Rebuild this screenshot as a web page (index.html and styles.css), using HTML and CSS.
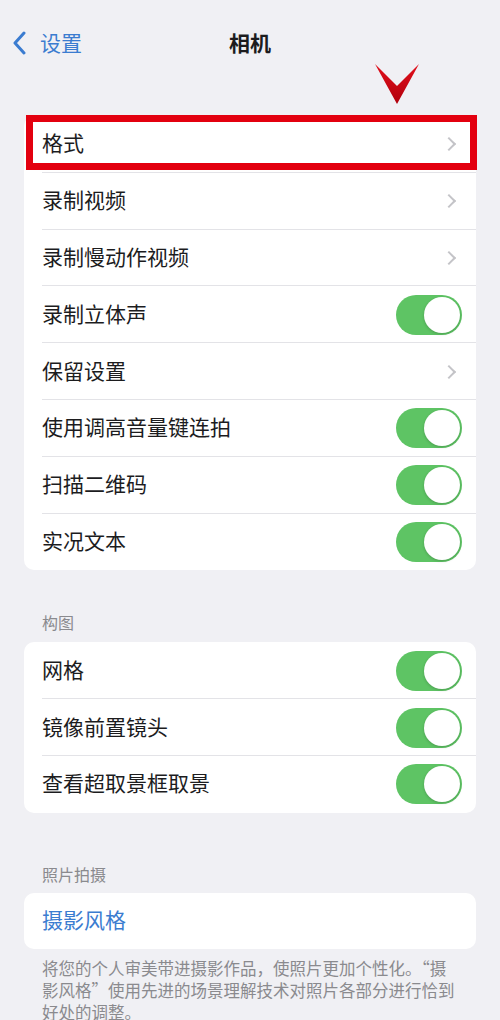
FILE: index.html
```html
<!DOCTYPE html>
<html lang="zh-CN">
<head>
    <meta charset="UTF-8">
    <meta name="viewport" content="width=device-width, initial-scale=1.0">
    <title>相机</title>
    <link rel="stylesheet" href="styles.css">
</head>
<body>
    <header class="nav">
        <a class="back" href="#">
            <svg width="15" height="24" viewBox="0 0 15 24"><path d="M12 2 L3 12 L12 22" fill="none" stroke="currentColor" stroke-width="3" stroke-linecap="round" stroke-linejoin="round"/></svg>
            <span>设置</span>
        </a>
        <h1 class="title">相机</h1>
        <span></span>
    </header>

    <!-- annotation arrow -->
    <svg class="pointer" width="44" height="42" viewBox="0 0 44 42">
        <defs>
            <linearGradient id="rg" x1="0" y1="0" x2="0" y2="1">
                <stop offset="0" stop-color="#e2101c"/>
                <stop offset="1" stop-color="#b0000c"/>
            </linearGradient>
        </defs>
        <path d="M0 0 L22 40 L44 0 L22 22 Z" fill="url(#rg)"/>
    </svg>

    <section class="group first">
        <div class="card">
            <div class="row marked"><span>格式</span><i class="chev"></i></div>
            <div class="row"><span>录制视频</span><i class="chev"></i></div>
            <div class="row"><span>录制慢动作视频</span><i class="chev"></i></div>
            <div class="row"><span>录制立体声</span><i class="switch"></i></div>
            <div class="row"><span>保留设置</span><i class="chev"></i></div>
            <div class="row"><span>使用调高音量键连拍</span><i class="switch"></i></div>
            <div class="row"><span>扫描二维码</span><i class="switch"></i></div>
            <div class="row"><span>实况文本</span><i class="switch"></i></div>
        </div>
    </section>

    <section class="group">
        <h3 class="label label-a">构图</h3>
        <div class="card">
            <div class="row"><span>网格</span><i class="switch"></i></div>
            <div class="row"><span>镜像前置镜头</span><i class="switch"></i></div>
            <div class="row"><span>查看超取景框取景</span><i class="switch"></i></div>
        </div>
    </section>

    <section class="group">
        <h3 class="label label-b">照片拍摄</h3>
        <div class="card">
            <div class="row short link"><span>摄影风格</span></div>
        </div>
        <p class="note">将您的个人审美带进摄影作品，使照片更加个性化。“摄<br>影风格”使用先进的场景理解技术对照片各部分进行恰到<br>好处的调整。</p>
    </section>
</body>
</html>
```

FILE: styles.css
```css
body {
    margin: 0;
    background: #f0f0f4;
    color: #1c1c1e;
    font-family: "Noto Sans CJK SC", "Noto Sans", sans-serif;
    position: relative;
    overflow: hidden;
    height: 1020px;
}

.nav {
    display: grid;
    grid-template-columns: 1fr auto 1fr;
    align-items: center;
    height: 28px;
    padding: 28px 0 32px;
}

.back {
    display: flex;
    align-items: center;
    gap: 13px;
    padding-left: 12px;
    color: #3b7cd0;
    text-decoration: none;
    font-size: 21px;
    line-height: 28px;
}

.back svg {
    display: block;
    margin-top: 2px;
}

.title {
    margin: 0;
    font-size: 21px;
    line-height: 28px;
    font-weight: 700;
}

.pointer {
    position: absolute;
    left: 375px;
    top: 64px;
}

.group {
    margin: 0 24px;
}

.group.first {
    margin-top: 28px;
}

.card {
    background: #fff;
    border-radius: 10px;
}

.row {
    position: relative;
    display: flex;
    align-items: center;
    justify-content: space-between;
    height: 56.8px;
    padding: 0 14px 0 18px;
    font-size: 21px;
}

.row span {
    margin-bottom: 4px;
}

.row::before {
    content: "";
    position: absolute;
    left: 18px;
    right: 0;
    bottom: 0;
    height: 1px;
    background: #e3e3e7;
}

.row:last-child::before {
    display: none;
}

.row.short {
    height: 56px;
}

.row.link {
    color: #3b7cd0;
}

.row.marked::after {
    content: "";
    position: absolute;
    left: 2px;
    right: -1px;
    top: -1px;
    bottom: 3px;
    border: 7px solid #e3000f;
}

.chev {
    width: 8px;
    height: 8px;
    margin-right: 8px;
    border-top: 2px solid #c4c4c8;
    border-right: 2px solid #c4c4c8;
    transform: rotate(45deg);
}

.switch {
    position: relative;
    width: 66px;
    height: 40px;
    border-radius: 20px;
    background: #5ec464;
}

.switch::after {
    content: "";
    position: absolute;
    right: 2px;
    top: 2px;
    width: 36px;
    height: 36px;
    border-radius: 50%;
    background: #fff;
    box-shadow: 0 1px 3px rgba(0, 0, 0, 0.2);
}

.label {
    margin: 0 0 0 18px;
    font-size: 16px;
    line-height: 20px;
    font-weight: 400;
    color: #8a8a8e;
}

.label-a {
    padding: 42px 0 10px;
}

.label-b {
    padding: 51px 0 9px;
}

.note {
    margin: 8px 0 0 18px;
    font-size: 16.5px;
    line-height: 22px;
    color: #8a8a8e;
    white-space: nowrap;
}
```
